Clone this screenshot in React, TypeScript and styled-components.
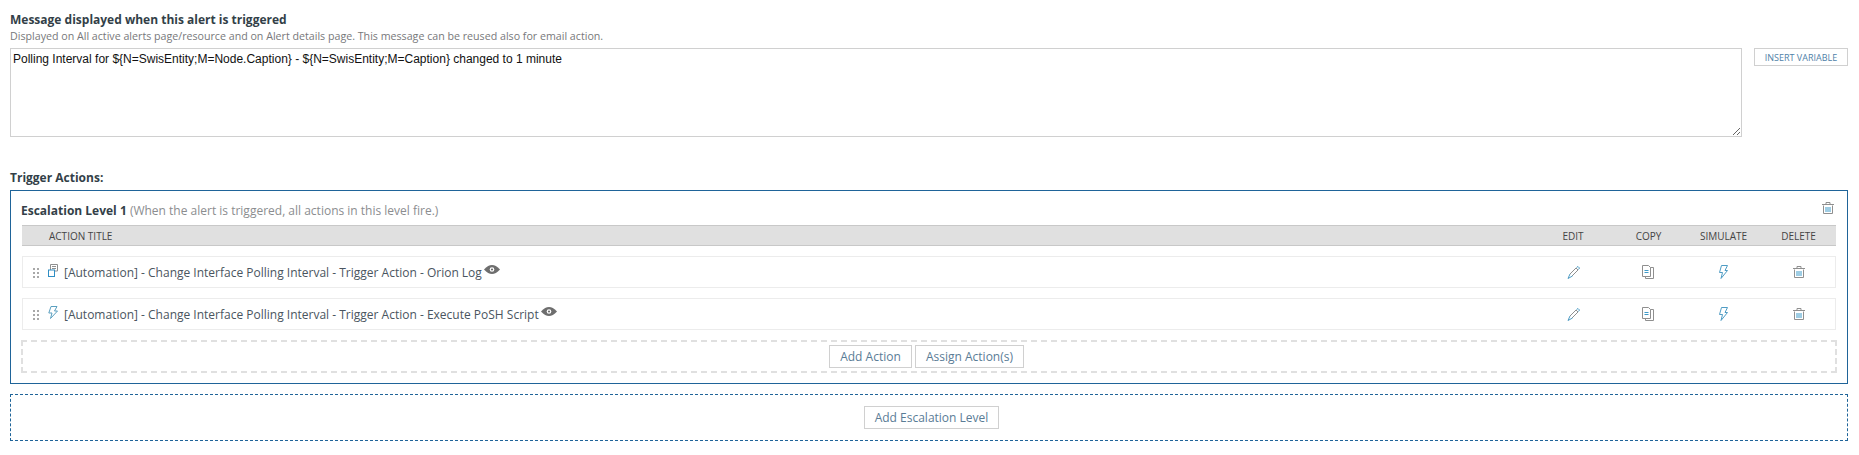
import React from "react";
import styled, { createGlobalStyle } from "styled-components";

const Global = createGlobalStyle`
  html, body { margin: 0; padding: 0; background: #fff; }
  * { box-sizing: border-box; }
  body { font-family: "Open Sans", "Liberation Sans", sans-serif; color: #333; }
`;

const Page = styled.div`
  width: 1859px;
  height: 455px;
  overflow: hidden;
  padding: 12px 11px 0 10px;
  display: flex;
  flex-direction: column;
`;
const Heading = styled.div`
  font-size: 12px;
  font-weight: 700;
  line-height: 16px;
  color: #333f48;
`;
const Hint = styled.div`
  font-size: 10.67px;
  line-height: 14px;
  margin-top: 1px;
  color: #77787b;
`;
const MessageRow = styled.div`
  display: flex;
  gap: 12px;
  margin-top: 5px;
  align-items: flex-start;
`;
const MessageInput = styled.textarea`
  width: 1732px;
  height: 89px;
  border: 1px solid #d0d0d0;
  padding: 3px 2px;
  margin: 0;
  font-family: "Liberation Sans", Arial, sans-serif;
  font-size: 12px;
  line-height: 14px;
  color: #111;
  outline: none;
`;
const GhostButton = styled.button<{ $small?: boolean }>`
  background: #fff;
  border: 1px solid #d0d0d0;
  font-family: "Open Sans", sans-serif;
  color: ${(p) => (p.$small ? "#4f81a8" : "#5a7c96")};
  font-size: ${(p) => (p.$small ? "9px" : "12px")};
  height: ${(p) => (p.$small ? "18px" : "23px")};
  padding: 0;
  margin: 0;
  display: flex;
  align-items: center;
  justify-content: center;
  flex: none;
  width: ${(p) => (p.$small ? "94px" : "auto")};
`;
const ActionButton = styled(GhostButton)<{ $w: number }>`
  width: ${(p) => p.$w}px;
`;
const TriggerLabel = styled(Heading)`
  margin-top: 33px;
`;
const Level = styled.div`
  margin-top: 4px;
  height: 194px;
  border: 1px solid #1f6499;
  padding: 0 11px;
  display: flex;
  flex-direction: column;
`;
const LevelHead = styled.div`
  height: 34px;
  display: flex;
  align-items: center;
  justify-content: space-between;
  padding-right: 2px;
`;
const LevelTitle = styled.div`
  font-size: 12px;
  font-weight: 700;
  color: #333f48;
  margin: 4px 0 0 -1px;
`;
const LevelNote = styled.span`
  font-weight: 400;
  font-size: 12px;
  color: #8b8d8f;
`;
const Columns = styled.div`
  display: grid;
  grid-template-columns: 1fr 76px 75px 75px 75px;
`;
const HeaderRow = styled(Columns)`
  height: 21px;
  background: #e0e0e0;
  border-top: 1px solid #c8c8c8;
  border-bottom: 1px solid #c8c8c8;
  font-size: 10px;
  color: #444;
  align-items: center;
  text-align: center;
`;
const TitleHead = styled.div`
  text-align: left;
  padding-left: 27px;
`;
const ActionRow = styled(Columns)`
  height: 32px;
  margin-top: 10px;
  box-shadow: inset 0 0 0 1px #ececec;
  align-items: center;
  justify-items: center;
`;
const TitleCell = styled.div`
  justify-self: start;
  display: flex;
  align-items: center;
  font-size: 12px;
  color: #4a5560;
  padding-left: 11px;
`;
const Grip = styled.svg`
  width: 6px;
  height: 10px;
  flex: none;
  margin: 2px 9px 0 0;
`;
const TypeIcon = styled.svg`
  width: 10px;
  height: 13px;
  flex: none;
  margin: -4px 6px 0 0;
`;
const Eye = styled.svg`
  width: 16px;
  height: 9px;
  margin: -5px 0 0 2px;
  flex: none;
`;
const CellIcon = styled.svg<{ $w: number; $h: number; $shift?: number }>`
  width: ${(p) => p.$w}px;
  height: ${(p) => p.$h}px;
  margin-left: ${(p) => p.$shift ?? 0}px;
  display: block;
`;
const ActionDrop = styled.div`
  margin: 10px -1px 0;
  height: 33px;
  padding-right: 5px;
  border: 2px dashed #e0e0e0;
  display: flex;
  justify-content: center;
  align-items: center;
  gap: 3px;
`;
const AddLevel = styled.div`
  margin-top: 10px;
  height: 47px;
  padding-left: 5px;
  border: 1px dashed #1f6499;
  display: flex;
  align-items: center;
  justify-content: center;
`;

const GripIcon = () => (
  <Grip viewBox="0 0 6 10">
    {[0, 4, 8].flatMap((y) =>
      [0, 4].map((x) => <rect key={`${x}-${y}`} x={x} y={y} width="2" height="2" fill="#a8a8a8" />)
    )}
  </Grip>
);
const EyeIcon = () => (
  <Eye viewBox="0 0 16 9">
    <path d="M0 4.500C2.800 1.200 5.500 0 8 0s5.200 1.200 8 4.500C13.200 7.800 10.500 9 8 9S2.800 7.800 0 4.500z" fill="#6e6e6e" />
    <circle cx="8" cy="4.500" r="2.300" fill="#fff" />
    <circle cx="8" cy="4.500" r="1.100" fill="#6e6e6e" />
  </Eye>
);
const Pencil = () => (
  <CellIcon $w={13} $h={13} viewBox="0 0 13 13" fill="none">
    <path d="M3 8 9 2l2 2-6 6" stroke="#8f8f8f" />
    <path d="M9.500 1.500 11 .5 12.500 2l-1 1.500" stroke="#4f9cc4" />
    <path d="M3 8 1 12.500 5.500 10" stroke="#4f9cc4" />
  </CellIcon>
);
const Copy = () => (
  <CellIcon $w={12} $h={14} $shift={-1} viewBox="0 0 12 14" fill="none">
    <path d="M.5.500h6l2 2v9h-8z" stroke="#8f8f8f" />
    <path d="M8.500 2.500h3v11h-8v-2" stroke="#8f8f8f" />
    <path d="M2.500 5.500h4M2.500 7.500h4" stroke="#3f9bc9" />
  </CellIcon>
);
const Bolt = () => (
  <CellIcon $w={9} $h={14} viewBox="0 0 9 14" fill="none">
    <path d="M2.500.5h6L6 5.500h2.500L2 13.500 3.500 7.500H.5z" stroke="#4f9cc4" />
  </CellIcon>
);
const Trash = () => (
  <CellIcon $w={12} $h={12} viewBox="0 0 12 12" fill="none">
    <path d="M0 2.500h12M4 2.500V.5h4v2M1.500 3.500v8h9v-8" stroke="#8f8f8f" />
    <path d="M4 5v5M6 5v5M8 5v5" stroke="#3f9bc9" />
  </CellIcon>
);
const LogIcon = () => (
  <TypeIcon viewBox="0 0 10 13" fill="none">
    <path d="M2.500 6V.5h7v6.500H7" stroke="#8f8f8f" />
    <path d="M4 2.500h4M4 4.500h4" stroke="#8f8f8f" />
    <rect x=".5" y="6" width="6" height="6.500" stroke="#2f8ec4" />
  </TypeIcon>
);
const BoltType = () => (
  <TypeIcon viewBox="0 0 10 13" fill="none">
    <path d="M3 .5h6L6.500 5h3L2.500 12.500 4 7H.8z" stroke="#5a9fbf" />
  </TypeIcon>
);

const actions = [
  { id: 1, icon: <LogIcon />, title: "[Automation] - Change Interface Polling Interval - Trigger Action - Orion Log" },
  { id: 2, icon: <BoltType />, title: "[Automation] - Change Interface Polling Interval - Trigger Action - Execute PoSH Script" },
];

export default function App() {
  return (
    <Page>
      <Global />
      <Heading>Message displayed when this alert is triggered</Heading>
      <Hint>Displayed on All active alerts page/resource and on Alert details page. This message can be reused also for email action.</Hint>
      <MessageRow>
        <MessageInput defaultValue="Polling Interval for ${N=SwisEntity;M=Node.Caption} - ${N=SwisEntity;M=Caption} changed to 1 minute" />
        <GhostButton $small>INSERT VARIABLE</GhostButton>
      </MessageRow>
      <TriggerLabel>Trigger Actions:</TriggerLabel>
      <Level>
        <LevelHead>
          <LevelTitle>
            Escalation Level 1 <LevelNote>(When the alert is triggered, all actions in this level fire.)</LevelNote>
          </LevelTitle>
          <Trash />
        </LevelHead>
        <HeaderRow>
          <TitleHead>ACTION TITLE</TitleHead>
          <div>EDIT</div>
          <div>COPY</div>
          <div>SIMULATE</div>
          <div>DELETE</div>
        </HeaderRow>
        {actions.map((a) => (
          <ActionRow key={a.id}>
            <TitleCell>
              <GripIcon />
              {a.icon}
              {a.title}
              <EyeIcon />
            </TitleCell>
            <Pencil />
            <Copy />
            <Bolt />
            <Trash />
          </ActionRow>
        ))}
        <ActionDrop>
          <ActionButton $w={83}>Add Action</ActionButton>
          <ActionButton $w={109}>Assign Action(s)</ActionButton>
        </ActionDrop>
      </Level>
      <AddLevel>
        <ActionButton $w={135}>Add Escalation Level</ActionButton>
      </AddLevel>
    </Page>
  );
}
